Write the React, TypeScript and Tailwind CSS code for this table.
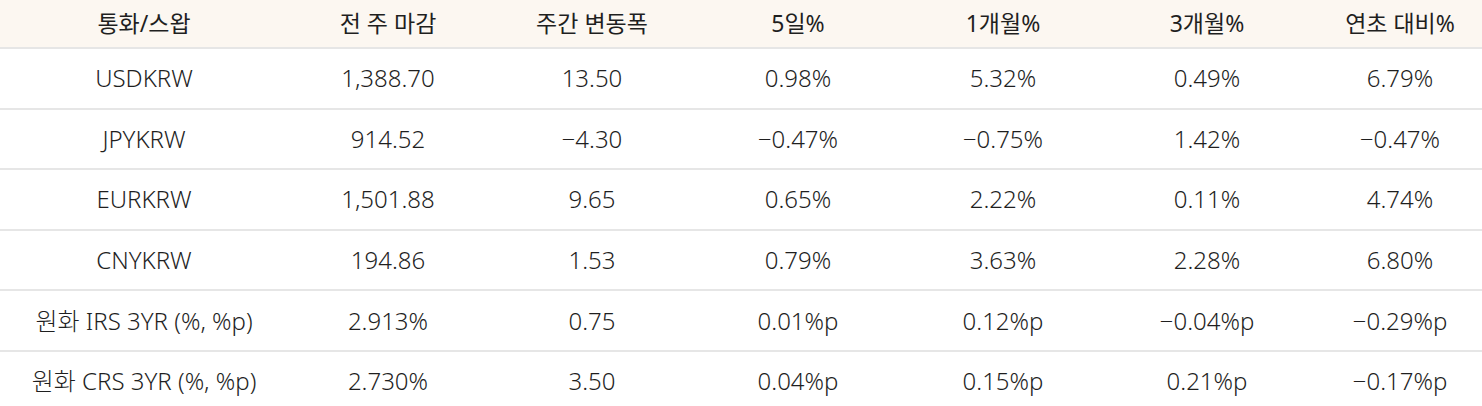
const headers = ['통화/스왑', '전 주 마감', '주간 변동폭', '5일%', '1개월%', '3개월%', '연초 대비%'];

const rows: string[][] = [
  ['USDKRW', '1,388.70', '13.50', '0.98%', '5.32%', '0.49%', '6.79%'],
  ['JPYKRW', '914.52', '−4.30', '−0.47%', '−0.75%', '1.42%', '−0.47%'],
  ['EURKRW', '1,501.88', '9.65', '0.65%', '2.22%', '0.11%', '4.74%'],
  ['CNYKRW', '194.86', '1.53', '0.79%', '3.63%', '2.28%', '6.80%'],
  ['원화 IRS 3YR (%, %p)', '2.913%', '0.75', '0.01%p', '0.12%p', '−0.04%p', '−0.29%p'],
  ['원화 CRS 3YR (%, %p)', '2.730%', '3.50', '0.04%p', '0.15%p', '0.21%p', '−0.17%p'],
];

const cols = 'grid grid-cols-[288px_200px_208px_204px_206px_202px_184px]';

export default function App() {
  return (
    <div className="w-[1482px] h-[406px] overflow-hidden bg-white">
      <div
        className="w-[1492px] text-[#1f1f1f] text-[24px]"
        style={{ fontFamily: '"Noto Sans", "Noto Sans CJK KR", sans-serif' }}
      >
        {/* Header */}
        <div className={`${cols} h-[49px] bg-[#fcf7f1] border-b-2 border-[#e6e6e6] text-[23px]`}>
          {headers.map((h) => (
            <div key={h} className="flex items-center justify-center font-normal pb-px">
              {h}
            </div>
          ))}
        </div>

        {/* Body */}
        {rows.map((r) => (
          <div key={r[0]} className={`${cols} h-[60.6px] border-b-2 border-[#e6e6e6]`}>
            {r.map((c, i) => (
              <div key={i} className="flex items-center justify-center font-light">
                {c}
              </div>
            ))}
          </div>
        ))}
      </div>
    </div>
  );
}
